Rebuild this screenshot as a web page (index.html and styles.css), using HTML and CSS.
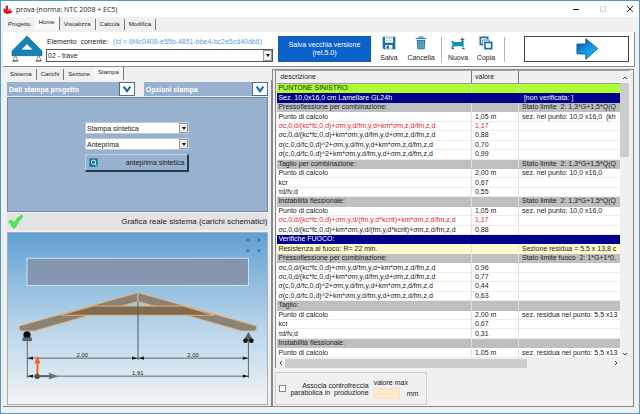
FILE: index.html
```html
<!DOCTYPE html>
<html lang="it">
<head>
<meta charset="utf-8">
<title>prova (norma: NTC 2008 + EC5)</title>
<link rel="stylesheet" href="styles.css">
</head>
<body>
<div class="window">
  <header class="titlebar">
    <svg class="app-icon" viewBox="0 0 30 30" aria-hidden="true"><path d="M1 14l4-1 3 6V8l4-5 3 3v12l10-5-3 7 7 1-5 7-13 2-9-5z" fill="#d3161f"/><path d="M12 20l10-2" stroke="#fff" stroke-width="1"/></svg>
    <h1>prova (norma: NTC 2008 + EC5)</h1>
    <div class="window-buttons">
      <button type="button" aria-label="Riduci"><svg viewBox="0 0 8 8"><path d="M1 4.500h6" stroke="#222"/></svg></button>
      <button type="button" aria-label="Ingrandisci" disabled><svg viewBox="0 0 8 8"><path d="M1.500 1.500h5v5h-5z" fill="none" stroke="#d4d4d4"/></svg></button>
      <button type="button" aria-label="Chiudi"><svg viewBox="0 0 8 8"><path d="M1 1l6 6M7 1l-6 6" stroke="#333"/></svg></button>
    </div>
  </header>

  <nav class="tabs main-tabs">
    <button type="button" class="before-active">Progetto</button>
    <button type="button" class="active">Home</button>
    <button type="button">Visualizza</button>
    <button type="button">Calcola</button>
    <button type="button">Modifica</button>
  </nav>

  <section class="toolbar">
    <svg class="truss-icon" viewBox="0 0 96 78" aria-hidden="true">
      <path d="M6 74l7-18 7 18zM76 74l7-18 7 18z" fill="#fff" stroke="#555" stroke-width="2"/>
      <path fill-rule="evenodd" d="M48 0L3 45v14h90V45zM48 23L29 42h38z" fill="#1583b5" stroke="#0b6591" stroke-width="2"/>
      <path d="M4 75h18M74 75h18" stroke="#555" stroke-width="3"/>
    </svg>
    <div class="element">
      <div class="element-head"><label for="elemento">Elemento&nbsp; corrente:</label><span class="element-id">(id = 6f4c0408-e55b-4851-bbe4-bc2e5cd40db6)</span></div>
      <div class="select-box wide"><select id="elemento"><option>02 - trave</option></select><span class="arrow"></span></div>
    </div>
    <button type="button" class="save-old">Salva vecchia versione<br>(rel.5.0)</button>
    <button type="button" class="tool">
      <svg viewBox="0 0 42 42"><path fill-rule="evenodd" d="M2 2h38v38H6l-4-4zM9 4v16h24V4zM10 27v11h21V27z" fill="#17709f"/><path d="M12 8h18M12 14h18" stroke="#78acc8" stroke-width="2"/><path d="M14 29h7v9h-7z" fill="#17709f"/></svg>
      <span>Salva</span>
    </button>
    <button type="button" class="tool tool-wide">
      <svg viewBox="0 0 42 42"><path d="M5 8h32M15 7V3h12v4" fill="none" stroke="#17709f" stroke-width="3"/><path d="M8 12h26l-2 28H10z" fill="#287ca8"/><path d="M14 15l1 22M21 15v22M28 15l-1 22" stroke="#c5deea" stroke-width="2"/></svg>
      <span>Cancella</span>
    </button>
    <i class="divider"></i>
    <button type="button" class="tool">
      <svg viewBox="0 0 42 42"><path d="M1 15h5l3 3h20l3-3h6v20l-6-4H11l-7 6-3-2 4-8z" fill="#1290b0"/><path d="M28 11h12M34 5v12M1 38h8M33 38h8" stroke="#28566b" stroke-width="3"/></svg>
      <span>Nuova</span>
    </button>
    <button type="button" class="tool">
      <svg viewBox="0 0 42 42"><path d="M9 25H4V4h22v6" fill="none" stroke="#17709f" stroke-width="5"/><path d="M11 31V12h20v4" fill="none" stroke="#3b91b8" stroke-width="3"/><path d="M18 19h20v19H18z" fill="#fff" stroke="#17709f" stroke-width="5"/></svg>
      <span>Copia</span>
    </button>
    <i class="divider"></i>
    <button type="button" class="next" aria-label="Avanti">
      <svg viewBox="0 0 70 66"><defs><linearGradient id="blu" x1="0" y1="0" x2=".7" y2="1"><stop offset="0" stop-color="#0b3d8c"/><stop offset=".5" stop-color="#0d8fe0"/><stop offset="1" stop-color="#25b4f6"/></linearGradient></defs><path d="M3 18h27V2l36 30-36 32V48H3z" fill="url(#blu)" stroke="#155b97" stroke-width="3"/></svg>
    </button>
  </section>

  <main class="content">
    <section class="left">
      <nav class="tabs sub-tabs">
        <button type="button">Sistema</button>
        <button type="button">Carichi</button>
        <button type="button" class="before-active">Sezione</button>
        <button type="button" class="active">Stampa</button>
      </nav>
      <div class="left-panel">
        <div class="headers">
          <div class="header"><h2>Dati stampa progetto</h2><button type="button" aria-label="Apri dati stampa"><svg viewBox="0 0 24 20"><path d="M4 3l8 11 8-11" fill="none" stroke="#126da0" stroke-width="5"/></svg></button></div>
          <div class="header"><h2>Opzioni stampa</h2><button type="button" aria-label="Apri opzioni stampa"><svg viewBox="0 0 24 20"><path d="M4 3l8 11 8-11" fill="none" stroke="#126da0" stroke-width="5"/></svg></button></div>
        </div>
        <div class="print">
          <div class="select-box"><select aria-label="Tipo di stampa"><option>Stampa sintetica</option></select><span class="arrow"></span></div>
          <div class="select-box"><select aria-label="Destinazione"><option>Anteprima</option></select><span class="arrow"></span></div>
          <button type="button" class="preview">
            <svg viewBox="0 0 26 26"><path d="M1 1h24v24H1z" fill="#0b6fa3"/><circle cx="13" cy="12" r="6" fill="none" stroke="#d5ecf5" stroke-width="3"/><path d="M17 17l5 5" stroke="#d5ecf5" stroke-width="3"/></svg>
            <span>anteprima sintetica</span>
          </button>
        </div>
        <div class="caption">
          <svg viewBox="0 0 46 44" aria-hidden="true"><path d="M2 22q8-7 12-2l4 7Q29 8 43 2l2 6Q31 21 23 40q-6 5-9 0Q9 28 2 22z" fill="#4bea58" stroke="#35c944" stroke-width="2"/></svg>
          <span>Grafica reale sistema (carichi schematici)</span>
        </div>
        <svg class="drawing" viewBox="21 63 780 522" role="img" aria-label="Schema della trave">
          <defs><linearGradient id="load" x1="0" y1="0" x2="1" y2="0"><stop offset="0" stop-color="#8497b1"/><stop offset="1" stop-color="#8494ac"/></linearGradient></defs>
          <g stroke="#26709f" stroke-width="3" fill="none"><path d="M745 89v-7h7M746 83l7 7M784 89v-7h-7M783 83l-7 7M745 112v7h7M746 118l7-7M784 112v7h-7M783 118l-7-7"/></g>
          <rect x="73" y="140" width="676" height="83" fill="url(#load)" stroke="#d3e3f1" stroke-width="3"/>
          <g stroke="#e8b476" stroke-width="3" stroke-linejoin="round">
            <path d="M412 245v27L95 362H56l-7-6v-9z" fill="#8b8276"/>
            <path d="M412 245v27l316 90h40l6-6v-9z" fill="#8b8276"/>
            <path d="M275 286h274l95 28H175z" fill="#806b51"/>
          </g>
          <path d="M412 272v178" stroke="#4f5962" stroke-width="3"/>
          <path d="M74 390v116M749 390v116M74 445h675M74 500h675" stroke="#20262b" stroke-width="2"/>
          <path d="M75 445l16-5v10zM410 445l-16-5v10zM414 445l16-5v10zM748 445l-16-5v10zM75 500l16-5v10zM748 500l-16-5v10z" fill="#111"/>
          <circle cx="73" cy="374" r="11" fill="#0b0b0b"/><path d="M59 382h29v11H59z" fill="#5b6368"/>
          <path d="M749 365l16 28h-32z" fill="#586067"/><circle cx="740" cy="392" r="7" fill="#111"/><circle cx="758" cy="392" r="7" fill="#111"/>
          <path d="M105 500v-42" stroke="#f26322" stroke-width="6"/><path d="M105 436l9 25H96z" fill="#f26322"/>
          <path d="M105 500h40" stroke="#596067" stroke-width="6"/><path d="M164 500l-24-9 6 9-6 9z" fill="#777f84" stroke="#4b5359" stroke-width="2"/>
          <circle cx="104" cy="501" r="8" fill="#5a5250"/>
          <g class="dim"><text x="242" y="442">2,00</text><text x="580" y="442">2,00</text><text x="411" y="497">1,91</text></g>
        </svg>
      </div>
    </section>

    <section class="right">
      <div class="grid">
        <div class="table-view">
          <table>
            <colgroup><col><col class="c-value"><col class="c-note"></colgroup>
            <thead><tr><th>descrizione</th><th>valore</th><th></th></tr></thead>
            <tbody>
              <tr class="green"><td>PUNTONE SINISTRO:</td><td></td><td></td></tr>
              <tr class="navy"><td>Sez. 10,0x16,0 cm Lamellare GL24h</td><td></td><td>&nbsp;[non verificata: ]</td></tr>
              <tr class="gray"><td>Pressoflessione per combinazione:</td><td></td><td>Stato limite&nbsp; 2: 1,3*G+1,5*Q(Q</td></tr>
              <tr><td>Punto di calcolo</td><td>1,05 m</td><td>sez. nel punto: 10,0 x16,0&nbsp; (kh</td></tr>
              <tr class="red"><td>σc,0,d/(kc*fc,0,d)+σm,y,d/fm,y,d+km*σm,z,d/fm,z,d</td><td>1,17</td><td></td></tr>
              <tr><td>σc,0,d/(kc*fc,0,d)+km*σm,y,d/fm,y,d+σm,z,d/fm,z,d</td><td>0,88</td><td></td></tr>
              <tr><td>σ(c,0,d/fc,0,d)^2+σm,y,d/fm,y,d+km*σm,z,d/fm,z,d</td><td>0,70</td><td></td></tr>
              <tr><td>σ(c,0,d/fc,0,d)^2+km*σm,y,d/fm,y,d+σm,z,d/fm,z,d</td><td>0,99</td><td></td></tr>
              <tr class="gray"><td>Taglio per combinazione:</td><td></td><td>Stato limite&nbsp; 2: 1,3*G+1,5*Q(Q</td></tr>
              <tr><td>Punto di calcolo</td><td>2,00 m</td><td>sez. nel punto: 10,0 x16,0</td></tr>
              <tr><td>kcr</td><td>0,67</td><td></td></tr>
              <tr><td>τd/fv,d</td><td>0,55</td><td></td></tr>
              <tr class="gray"><td>Instabilità flessionale:</td><td></td><td>Stato limite&nbsp; 2: 1,3*G+1,5*Q(Q</td></tr>
              <tr><td>Punto di calcolo</td><td>1,05 m</td><td>sez. nel punto: 10,0 x16,0</td></tr>
              <tr class="red"><td>σc,0,d/(kc*fc,0,d)+σm,y,d/(fm,y,d*kcrit)+km*σm,z,d/fm,z,d</td><td>1,17</td><td></td></tr>
              <tr><td>σc,0,d/(kc*fc,0,d)+km*σm,y,d/(fm,y,d*kcrit)+σm,z,d/fm,z,d</td><td>0,88</td><td></td></tr>
              <tr class="navy"><td>Verifiche FUOCO:</td><td></td><td></td></tr>
              <tr class="cream"><td>Resistenza al fuoco: R= 22 min.</td><td></td><td>Sezione residua = 5,5 x 13,8 c</td></tr>
              <tr class="gray"><td>Pressoflessione per combinazione:</td><td></td><td>Stato limite fuoco&nbsp; 2: 1*G+1*0,</td></tr>
              <tr><td>σc,0,d/(kc*fc,0,d)+σm,y,d/fm,y,d+km*σm,z,d/fm,z,d</td><td>0,96</td><td></td></tr>
              <tr><td>σc,0,d/(kc*fc,0,d)+km*σm,y,d/fm,y,d+σm,z,d/fm,z,d</td><td>0,77</td><td></td></tr>
              <tr><td>σ(c,0,d/fc,0,d)^2+σm,y,d/fm,y,d+km*σm,z,d/fm,z,d</td><td>0,44</td><td></td></tr>
              <tr><td>σ(c,0,d/fc,0,d)^2+km*σm,y,d/fm,y,d+σm,z,d/fm,z,d</td><td>0,63</td><td></td></tr>
              <tr class="gray"><td>Taglio:</td><td></td><td></td></tr>
              <tr><td>Punto di calcolo</td><td>2,00 m</td><td>sez. residua nel punto: 5,5 x13</td></tr>
              <tr><td>kcr</td><td>0,67</td><td></td></tr>
              <tr><td>τd/fv,d</td><td>0,31</td><td></td></tr>
              <tr class="gray"><td>Instabilità flessionale:</td><td></td><td></td></tr>
              <tr><td>Punto di calcolo</td><td>1,05 m</td><td>sez. residua nel punto: 5,5 x13</td></tr>
            </tbody>
          </table>
        </div>
        <div class="vbar" aria-hidden="true">
          <svg viewBox="0 0 8 8"><path d="M2 5l2-2 2 2" fill="none" stroke="#444"/></svg><i></i>
          <svg viewBox="0 0 8 8"><path d="M2 3l2 2 2-2" fill="none" stroke="#444"/></svg>
        </div>
        <div class="hbar" aria-hidden="true">
          <svg viewBox="0 0 8 8"><path d="M5 2L3 4l2 2" fill="none" stroke="#444"/></svg><i></i>
          <svg viewBox="0 0 8 8"><path d="M3 2l2 2-2 2" fill="none" stroke="#444"/></svg>
        </div>
      </div>
      <div class="options">
        <input type="checkbox" id="controfreccia">
        <label for="controfreccia">Associa controfreccia<br>parabolica in&nbsp; produzione</label>
        <div class="max">
          <label for="max">valore max</label>
          <div class="max-row"><input type="text" id="max"><span>mm</span></div>
        </div>
      </div>
    </section>
  </main>
</div>
</body>
</html>
```
FILE: styles.css
```css
* { box-sizing: border-box; }

body {
  margin: 0;
  font: 7px/9px "Liberation Sans", Arial, sans-serif;
  color: #222;
  background: #f0f0f0;
}

button, input, select {
  font: inherit;
  color: inherit;
  margin: 0;
  padding: 0;
  border: 0;
  border-radius: 0;
  background: none;
}

h1, h2 { margin: 0; font-size: 7px; font-weight: normal; }

svg { display: block; }

.window {
  display: flex;
  flex-direction: column;
  height: 100vh;
  border: 1px solid #4f9dc4;
  background: #f0f0f0;
}

/* Title bar */
.titlebar {
  display: flex;
  align-items: center;
  height: 16px;
  padding: 0 5px 0 2px;
  gap: 3px;
  background: #fff;
}
.titlebar h1 { font-family: "Open Sans", "Noto Sans", sans-serif; }
.app-icon { width: 10px; height: 10px; }
.window-buttons { display: flex; gap: 19px; margin-left: auto; }
.window-buttons button, .window-buttons svg { width: 8px; height: 8px; }

/* Tabs */
.tabs { display: flex; align-items: flex-end; font-size: 6px; }
.tabs button {
  height: 11px;
  padding: 0 4px;
  border-right: 1px solid #777;
}
.tabs .before-active { border-right: 0; }
.tabs .active { height: 13px; padding: 0 4px 3px; background: #f8f8f8; border-right: 1px solid #777; }
.main-tabs { height: 15px; padding: 0 3px 2px; }
.sub-tabs { height: 13px; padding: 0 3px; }

/* Toolbar */
.toolbar {
  display: flex;
  align-items: center;
  height: 35px;
  margin: 0 4px 0 2px;
  padding: 0 5px 0 8px;
  background: #fff;
  border-right: 1px solid #888;
  border-bottom: 1px solid #888;
}
.truss-icon { width: 32px; height: 26px; flex: none; }
.element { flex: 0 0 227px; min-width: 0; margin: 0 5px 0 3px; }
.element-head { display: flex; gap: 5px; padding-left: 1px; margin-bottom: 3px; white-space: nowrap; }
.element-id { color: #5a9ed8; }

.select-box {
  display: flex;
  position: relative;
  height: 12px;
  background: #fff;
  border: 1px solid #bfc9d4;
}
.select-box select { appearance: none; width: 100%; padding: 0 1px; outline: 0; }
.select-box .arrow {
  position: absolute;
  inset: 0 0 0 auto;
  width: 9px;
  background: #f0f0f0;
  border: 1px solid #999;
  pointer-events: none;
}
.select-box .arrow::after {
  content: "";
  position: absolute;
  left: 2px;
  top: 3px;
  border: 2px solid transparent;
  border-width: 3px 2px 0;
  border-top-color: #111;
}
.select-box.wide { height: 13px; border-color: #555; }

.save-old {
  flex: 0 0 93px;
  height: 26px;
  margin-right: 4px;
  color: #fff;
  background: #0a62cc;
  line-height: 8px;
  border: 1px solid #1b57a3;
}
.tool {
  display: flex;
  flex-direction: column;
  align-items: center;
  gap: 3px;
  flex: 0 0 28px;
}
.tool-wide { flex-basis: 36px; }
.tool svg { width: 14px; height: 14px; }
.divider { width: 1px; height: 25px; margin: 0 2px; background: #b5b5b5; }
.divider:last-of-type { margin-left: 4px; }
.next {
  display: flex;
  flex: 0 1 105px;
  height: 26px;
  margin-left: auto;
  padding-left: 22px;
  align-items: center;
  justify-content: center;
  border: 1px solid #444;
}
.next svg { width: 23px; height: 22px; }

/* Content */
.content {
  display: grid;
  grid-template-columns: 269fr 361fr;
  flex: 1;
  min-height: 0;
  margin: 0 5px 6px 2px;
}
.left { display: flex; flex-direction: column; min-height: 0; }
.left-panel {
  display: flex;
  flex-direction: column;
  flex: 1;
  min-height: 0;
  padding: 2px 3px 1px 4px;
  border-right: 1px solid #888;
  border-bottom: 1px solid #888;
}
.headers { display: grid; grid-template-columns: 127fr 124fr; gap: 9px; margin-bottom: 1px; }
.header { display: flex; height: 14px; background: #98b1cf; }
.header h2 { flex: 1; padding: 3px 2px; color: #fff; font-weight: bold; }
.header button {
  display: grid;
  place-items: center;
  width: 16px;
  background: #fff;
  border: 1px solid #526c86;
}
.header button svg { width: 10px; height: 9px; }

.print {
  display: flex;
  flex-direction: column;
  gap: 4px;
  height: 115px;
  padding: 24px 78px 0 77px;
  background: #98b1cf;
  border: 1px solid #7185a5;
}
.preview {
  display: flex;
  align-items: center;
  justify-content: space-between;
  height: 18px;
  padding: 0 3px;
  border: 1px solid #bcd0e4;
  border-right: 2px solid #203a58;
  border-bottom: 2px solid #203a58;
}
.preview svg { width: 9px; height: 9px; }

.caption {
  display: flex;
  align-items: center;
  justify-content: space-between;
  height: 17px;
  margin: 1px 0 2px;
  padding: 0 1px;
  background: #e3e3e3;
  font-size: 8px;
}
.caption svg { width: 15px; height: 15px; }
.drawing {
  flex: 1;
  width: 100%;
  min-height: 0;
  background: linear-gradient(#60a1d4, #b1d0e7 50%, #f1f4f6);
  border: 1px solid #a4b0bb;
}
.dim { font-size: 18px; text-anchor: middle; fill: #222; }

/* Results */
.right {
  display: flex;
  flex-direction: column;
  min-width: 0;
  min-height: 0;
  margin-top: 2px;
  padding: 0 3px 1px 2px;
  border: 1px solid #888;
}
.grid {
  display: grid;
  grid-template: minmax(0, 1fr) 10px / minmax(0, 1fr) 10px;
  flex: 1;
  min-height: 0;
  padding-left: 1px;
  border-top: 1px solid #aaa;
  border-left: 1px solid #888;
}
.table-view { overflow: hidden; }
table {
  width: 100%;
  height: 100%;
  table-layout: fixed;
  border-collapse: separate;
  border-spacing: 0;
  background: #fff;
}
.c-value { width: 47px; }
.c-note { width: 101px; }
th, td {
  padding: 0 0 0 1px;
  text-align: left;
  white-space: nowrap;
  overflow: hidden;
  border-right: 1px solid #e2e2e2;
  line-height: 8px;
}
td { border-bottom: 1px solid #ececec; }
th {
  height: 13px;
  padding-left: 3px;
  font-weight: normal;
  background: #f0f0f0;
  border-right-color: #777;
  border-bottom: 1px solid #999;
}
td + td { padding-left: 3px; }
th:last-child, td:last-child { border-right: 0; }
.green td { background: #adff2f; border-bottom-color: #adff2f; }
.navy td { background: #00008b; border-color: #00008b; color: #fff; }
.gray td { background: #bfbfbf; border-bottom-color: #bfbfbf; }
.cream td { background: #fff9cf; border-bottom-color: #fff9cf; }
.red td { color: #e3242b; }

.vbar, .hbar { display: flex; align-items: center; background: #f0f0f0; }
.vbar { flex-direction: column; padding-top: 3px; }
.vbar i { width: 9px; height: 74px; margin: 1px 0 auto; background: #cdcdcd; }
.hbar i { flex: 0 1 242px; height: 9px; margin-right: auto; background: #cdcdcd; }
.vbar svg, .hbar svg { width: 8px; height: 8px; flex: none; }

.options {
  display: flex;
  align-items: center;
  align-self: flex-start;
  height: 33px;
  margin-top: 4px;
  padding: 0 8px 0 3px;
  border: 1px solid #d0d0d0;
  line-height: 7px;
  text-align: right;
}
.options input[type="checkbox"] {
  appearance: none;
  width: 7px;
  height: 7px;
  margin-right: 4px;
  background: #fff;
  border: 1px solid #888;
}
.max { margin-left: 5px; text-align: left; }
.max-row { display: flex; align-items: center; gap: 7px; margin-top: 2px; }
.max-row input { width: 26px; height: 11px; background: #ffe8cb; border: 1px solid #f3e2cf; }
```
